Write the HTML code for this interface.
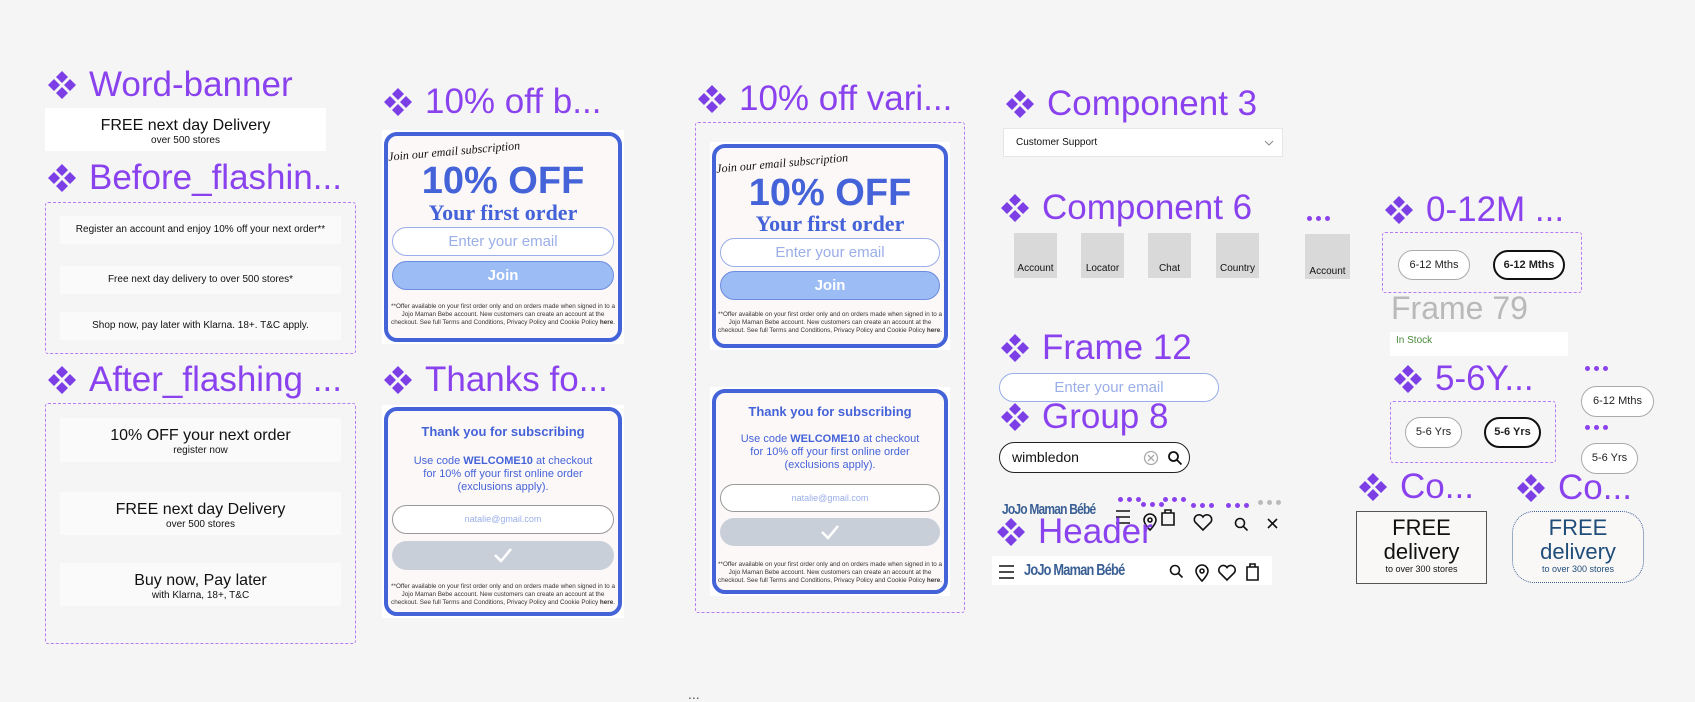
<!DOCTYPE html>
<html><head><meta charset="utf-8"><style>
*{margin:0;padding:0;box-sizing:border-box}
body{width:1695px;height:696px;background:#f5f5f5;position:relative;overflow:hidden;font-family:"Liberation Sans",sans-serif;color:#111}
.a{position:absolute}
.t{position:absolute;font-size:35px;color:#8a42ee;white-space:nowrap;line-height:1;display:flex;align-items:center}
.t svg{margin-right:12px;flex:none}
.dash{position:absolute;border:1.5px dashed #b77cf5;border-radius:3px}
.row{position:absolute;background:#fafafa;text-align:center;color:#111}
.card{position:absolute;background:#fff}
.in{position:absolute;left:2px;right:2px;top:2px;bottom:2px;border:4px solid #4463d8;border-radius:13px;background:#fdf8f8}
.blue{color:#4463d8}
.pill{position:absolute;border:1px solid #9aaee8;border-radius:20px;background:#fff;text-align:center;color:#9aaee8}
.fine{position:absolute;left:6px;right:6px;font-size:6.3px;line-height:8px;text-align:center;color:#333}
.gbox{position:absolute;background:#d9d9d9;font-size:10px;text-align:center;padding-top:30px}
.sp{position:absolute;border-radius:16px;background:#fff;font-size:11px;text-align:center;color:#222}
.dots{position:absolute;display:flex;gap:4px}
.dots i{width:5px;height:5px;border-radius:50%;background:#8a42ee;display:block}
.dots.g i{background:#bbb}
</style></head><body>
<svg width="0" height="0" style="position:absolute"><defs><g id="d"><path d="M15 1l6 6-6 6-6-6zM7 9l6 6-6 6-6-6zM23 9l6 6-6 6-6-6zM15 17l6 6-6 6-6-6z" fill="#7c3fe6"/></g></defs></svg>

<div class="t" style="left:47px;top:67px"><svg width="30" height="30"><use href="#d"/></svg>Word-banner</div>
<div class="row" style="left:45px;top:108px;width:281px;height:43px;background:#fff"><div style="font-size:16px;margin-top:9px">FREE next day Delivery</div><div style="font-size:10px">over 500 stores</div></div>
<div class="t" style="left:47px;top:160px"><svg width="30" height="30"><use href="#d"/></svg>Before_flashin...</div>
<div class="dash" style="left:45px;top:202px;width:311px;height:152px"></div>
<div class="row" style="left:60px;top:216px;width:281px;height:28px;font-size:10px;line-height:28px">Register an account and enjoy 10% off your next order**</div>
<div class="row" style="left:60px;top:266px;width:281px;height:28px;font-size:10px;line-height:28px">Free next day delivery to over 500 stores*</div>
<div class="row" style="left:60px;top:312px;width:281px;height:28px;font-size:10px;line-height:28px">Shop now, pay later with Klarna. 18+. T&amp;C apply.</div>
<div class="t" style="left:47px;top:362px"><svg width="30" height="30"><use href="#d"/></svg>After_flashing ...</div>
<div class="dash" style="left:45px;top:403px;width:311px;height:241px"></div>
<div class="row" style="left:60px;top:418px;width:281px;height:44px"><div style="font-size:16px;margin-top:9px">10% OFF your next order</div><div style="font-size:10px">register now</div></div>
<div class="row" style="left:60px;top:492px;width:281px;height:43px"><div style="font-size:16px;margin-top:9px">FREE next day Delivery</div><div style="font-size:10px">over 500 stores</div></div>
<div class="row" style="left:60px;top:563px;width:281px;height:43px"><div style="font-size:16px;margin-top:9px">Buy now, Pay later</div><div style="font-size:10px">with Klarna, 18+, T&amp;C</div></div>

<div class="t" style="left:383px;top:84px"><svg width="30" height="30"><use href="#d"/></svg>10% off b...</div>
<div class="card" style="left:382px;top:130px;width:242px;height:214px"><div class="in"></div>
 <div class="a" style="left:6px;top:14px;font:italic 12px 'Liberation Serif',serif;transform:rotate(-5deg);color:#111">Join our email subscription</div>
 <div class="a blue" style="left:0;right:0;top:30px;text-align:center;font-weight:bold;font-size:38px">10% OFF</div>
 <div class="a blue" style="left:0;right:0;top:70px;text-align:center;font:bold 22px 'Liberation Serif',serif">Your first order</div>
 <div class="pill" style="left:10px;right:10px;top:97px;height:29px;font-size:15px;line-height:27px">Enter your email</div>
 <div class="a" style="left:10px;right:10px;top:131px;height:29px;border-radius:16px;background:#9bbcf5;border:1px solid #6d8ce0;color:#fff;font-weight:bold;font-size:15px;text-align:center;line-height:27px">Join</div>
 <div class="fine" style="top:173px">**Offer available on your first order only and on orders made when signed in to a Jojo Maman Bebe account. New customers can create an account at the checkout. See full Terms and Conditions, Privacy Policy and Cookie Policy <b>here</b>.</div>
</div>
<div class="t" style="left:383px;top:362px"><svg width="30" height="30"><use href="#d"/></svg>Thanks fo...</div>
<div class="card" style="left:382px;top:405px;width:242px;height:213px"><div class="in"></div>
 <div class="a blue" style="left:0;right:0;top:19px;text-align:center;font-weight:bold;font-size:13px">Thank you for subscribing</div>
 <div class="a blue" style="left:0;right:0;top:50px;text-align:center;font-size:11px;line-height:13px">Use code <b>WELCOME10</b> at checkout<br>for 10% off your first online order<br>(exclusions apply).</div>
 <div class="pill" style="left:10px;right:10px;top:100px;height:29px;border-color:#999;font-size:9px;line-height:27px">natalie@gmail.com</div>
 <div class="a" style="left:10px;right:10px;top:136px;height:29px;border-radius:16px;background:#c9cfd9;text-align:center"><svg width="20" height="16" style="margin-top:6px"><path d="M2 8l6 6L18 2" fill="none" stroke="#fff" stroke-width="2.5"/></svg></div>
 <div class="fine" style="top:178px">**Offer available on your first order only and on orders made when signed in to a Jojo Maman Bebe account. New customers can create an account at the checkout. See full Terms and Conditions, Privacy Policy and Cookie Policy <b>here</b>.</div>
</div>

<div class="t" style="left:697px;top:81px"><svg width="30" height="30"><use href="#d"/></svg>10% off vari...</div>
<div class="dash" style="left:695px;top:122px;width:270px;height:491px"></div>
<div class="card" style="left:710px;top:142px;width:240px;height:208px"><div class="in"></div>
 <div class="a" style="left:6px;top:14px;font:italic 12px 'Liberation Serif',serif;transform:rotate(-5deg);color:#111">Join our email subscription</div>
 <div class="a blue" style="left:0;right:0;top:30px;text-align:center;font-weight:bold;font-size:38px">10% OFF</div>
 <div class="a blue" style="left:0;right:0;top:69px;text-align:center;font:bold 22px 'Liberation Serif',serif">Your first order</div>
 <div class="pill" style="left:10px;right:10px;top:96px;height:29px;font-size:15px;line-height:27px">Enter your email</div>
 <div class="a" style="left:10px;right:10px;top:129px;height:29px;border-radius:16px;background:#9bbcf5;border:1px solid #6d8ce0;color:#fff;font-weight:bold;font-size:15px;text-align:center;line-height:27px">Join</div>
 <div class="fine" style="top:169px">**Offer available on your first order only and on orders made when signed in to a Jojo Maman Bebe account. New customers can create an account at the checkout. See full Terms and Conditions, Privacy Policy and Cookie Policy <b>here</b>.</div>
</div>
<div class="card" style="left:710px;top:387px;width:240px;height:209px"><div class="in"></div>
 <div class="a blue" style="left:0;right:0;top:17px;text-align:center;font-weight:bold;font-size:13px">Thank you for subscribing</div>
 <div class="a blue" style="left:0;right:0;top:46px;text-align:center;font-size:11px;line-height:13px">Use code <b>WELCOME10</b> at checkout<br>for 10% off your first online order<br>(exclusions apply).</div>
 <div class="pill" style="left:10px;right:10px;top:97px;height:28px;border-color:#999;font-size:9px;line-height:26px">natalie@gmail.com</div>
 <div class="a" style="left:10px;right:10px;top:131px;height:28px;border-radius:16px;background:#c9cfd9;text-align:center"><svg width="20" height="16" style="margin-top:6px"><path d="M2 8l6 6L18 2" fill="none" stroke="#fff" stroke-width="2.5"/></svg></div>
 <div class="fine" style="top:174px">**Offer available on your first order only and on orders made when signed in to a Jojo Maman Bebe account. New customers can create an account at the checkout. See full Terms and Conditions, Privacy Policy and Cookie Policy <b>here</b>.</div>
</div>
<div class="a" style="left:688px;top:686px;color:#555;font-size:14px">...</div>

<div class="t" style="left:1005px;top:86px"><svg width="30" height="30"><use href="#d"/></svg>Component 3</div>
<div class="a" style="left:1003px;top:128px;width:280px;height:29px;background:#fff;border:1px solid #e6e6e6;font-size:10px;line-height:27px;padding-left:12px">Customer Support<svg class="a" style="right:8px;top:11px" width="10" height="6"><path d="M1 1l4 4 4-4" fill="none" stroke="#888"/></svg></div>
<div class="t" style="left:1000px;top:190px"><svg width="30" height="30"><use href="#d"/></svg>Component 6</div>
<div class="gbox" style="left:1014px;top:233px;width:43px;height:45px">Account</div>
<div class="gbox" style="left:1081px;top:233px;width:43px;height:45px">Locator</div>
<div class="gbox" style="left:1148px;top:233px;width:43px;height:45px">Chat</div>
<div class="gbox" style="left:1216px;top:233px;width:43px;height:45px">Country</div>
<div class="dots" style="left:1307px;top:216px"><i></i><i></i><i></i></div>
<div class="gbox" style="left:1305px;top:234px;width:45px;height:45px;padding-top:32px">Account</div>
<div class="t" style="left:1000px;top:330px"><svg width="30" height="30"><use href="#d"/></svg>Frame 12</div>
<div class="pill" style="left:999px;top:373px;width:220px;height:29px;font-size:15px;line-height:27px">Enter your email</div>
<div class="t" style="left:1000px;top:399px"><svg width="30" height="30"><use href="#d"/></svg>Group 8</div>
<div class="a" style="left:999px;top:442px;width:191px;height:31px;border:1.3px solid #222;border-radius:16px;background:#fff;font-size:14px;line-height:29px;padding-left:12px">wimbledon
 <svg class="a" style="left:143px;top:7px" width="16" height="16"><circle cx="8" cy="8" r="6.5" fill="none" stroke="#aaa" stroke-width="1.3"/><path d="M5 5l6 6M11 5l-6 6" stroke="#aaa" stroke-width="1.3"/></svg>
 <svg class="a" style="left:167px;top:7px" width="16" height="16"><circle cx="6.5" cy="6.5" r="4.5" fill="none" stroke="#111" stroke-width="1.8"/><path d="M10 10l4.5 4.5" stroke="#111" stroke-width="1.8"/></svg></div>

<div class="a" style="left:1002px;top:501px;font:bold 15px 'Liberation Sans',sans-serif;color:#3a5f95;letter-spacing:-1px;transform:scaleX(.8);transform-origin:left">JoJo Maman Bébé</div>
<div class="dots" style="left:1118px;top:497px"><i></i><i></i><i></i></div>
<div class="dots" style="left:1141px;top:502px"><i></i><i></i><i></i></div>
<div class="dots" style="left:1163px;top:497px"><i></i><i></i><i></i></div>
<div class="dots" style="left:1191px;top:503px"><i></i><i></i><i></i></div>
<div class="dots" style="left:1226px;top:503px"><i></i><i></i><i></i></div>
<div class="dots g" style="left:1258px;top:500px"><i></i><i></i><i></i></div>
<svg class="a" style="left:1116px;top:508px" width="170" height="26" fill="none" stroke="#111" stroke-width="1.6">
 <path d="M0 3h14M0 9h14M0 15h14"/>
 <path d="M34 22s-6-6-6-10a6 6 0 0 1 12 0c0 4-6 10-6 10z"/><circle cx="34" cy="12" r="2"/>
 <path d="M46 5h12v12H46zM49 5V2h6v3"/>
 <path d="M87 22l-8-8a4.5 4.5 0 0 1 8-5a4.5 4.5 0 0 1 8 5z"/>
 <circle cx="124" cy="15" r="4.5"/><path d="M127.5 18.5l4 4"/>
 <path d="M152 11l9 9M161 11l-9 9"/>
</svg>
<div class="t" style="left:996px;top:514px"><svg width="30" height="30"><use href="#d"/></svg>Header</div>
<div class="a" style="left:992px;top:556px;width:280px;height:29px;background:#fff"></div>
<svg class="a" style="left:998px;top:561px" width="270" height="22" fill="none" stroke="#111" stroke-width="1.6">
 <path d="M1 5h15M1 11h15M1 17h15"/>
 <circle cx="177" cy="9" r="4.5"/><path d="M180.5 12.5l4 4"/>
 <path d="M204 20s-6-6-6-10a6 6 0 0 1 12 0c0 4-6 10-6 10z"/><circle cx="204" cy="10" r="2"/>
 <path d="M229 19l-7.5-7.5a4.2 4.2 0 0 1 7.5-5a4.2 4.2 0 0 1 7.5 5z"/>
 <path d="M249 6h11v13h-11zM252 6V3h5v3"/>
</svg>
<div class="a" style="left:1024px;top:562px;font:bold 16px 'Liberation Sans',sans-serif;color:#3a5f95;letter-spacing:-1px;transform:scaleX(.8);transform-origin:left">JoJo Maman Bébé</div>

<div class="t" style="left:1384px;top:192px"><svg width="30" height="30"><use href="#d"/></svg>0-12M ...</div>
<div class="dash" style="left:1382px;top:232px;width:200px;height:61px"></div>
<div class="sp" style="left:1398px;top:250px;width:72px;height:30px;border:1px solid #aaa;line-height:28px">6-12 Mths</div>
<div class="sp" style="left:1493px;top:250px;width:72px;height:30px;border:2px solid #111;line-height:26px;font-weight:bold">6-12 Mths</div>
<div class="a" style="left:1391px;top:290px;font-size:32px;color:#b9b9b9">Frame 79</div>
<div class="a" style="left:1390px;top:332px;width:178px;height:24px;background:#fff;color:#4a8a3a;font-size:10px;line-height:18px;padding-left:6px">In Stock</div>
<div class="t" style="left:1393px;top:361px"><svg width="30" height="30"><use href="#d"/></svg>5-6Y...</div>
<div class="dash" style="left:1390px;top:401px;width:166px;height:62px"></div>
<div class="sp" style="left:1405px;top:417px;width:57px;height:31px;border:1px solid #aaa;line-height:29px">5-6 Yrs</div>
<div class="sp" style="left:1484px;top:417px;width:57px;height:31px;border:2px solid #111;line-height:27px;font-weight:bold">5-6 Yrs</div>
<div class="dots" style="left:1585px;top:366px"><i></i><i></i><i></i></div>
<div class="sp" style="left:1581px;top:386px;width:73px;height:31px;border:1px solid #aaa;line-height:29px">6-12 Mths</div>
<div class="dots" style="left:1585px;top:425px"><i></i><i></i><i></i></div>
<div class="sp" style="left:1581px;top:443px;width:57px;height:31px;border:1px solid #aaa;line-height:29px">5-6 Yrs</div>
<div class="t" style="left:1358px;top:469px"><svg width="30" height="30"><use href="#d"/></svg>Co...</div>
<div class="a" style="left:1356px;top:511px;width:131px;height:73px;border:1.5px solid #555;background:#faf8f7;text-align:center;color:#111"><div style="font-size:22px;line-height:24px;margin-top:4px">FREE<br>delivery</div><div style="font-size:9px">to over 300 stores</div></div>
<div class="t" style="left:1516px;top:470px"><svg width="30" height="30"><use href="#d"/></svg>Co...</div>
<div class="a" style="left:1512px;top:511px;width:132px;height:72px;border:1px dotted #3a5f95;border-radius:22px;background:#faf8f7;text-align:center;color:#1f4d7a"><div style="font-size:22px;line-height:24px;margin-top:4px">FREE<br>delivery</div><div style="font-size:9px">to over 300 stores</div></div>
</body></html>
